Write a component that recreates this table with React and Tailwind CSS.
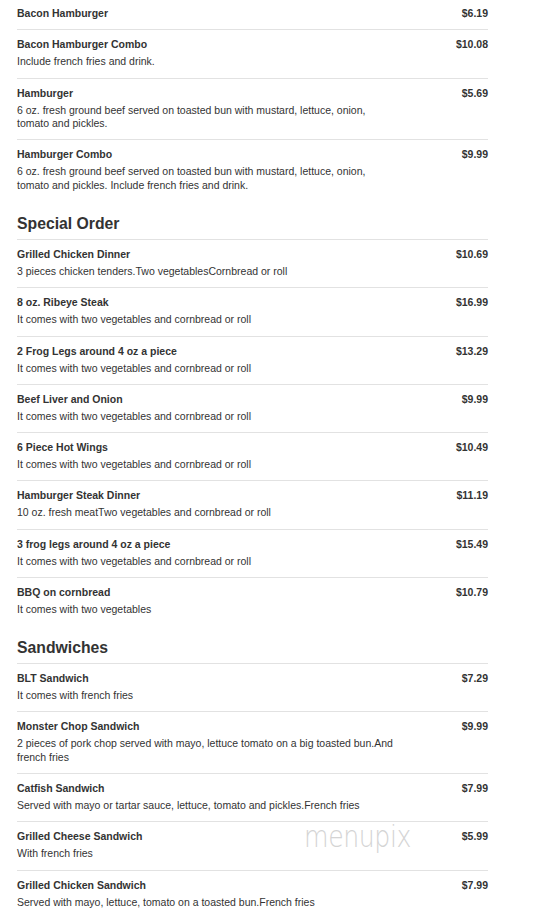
import React from "react";

const sections = [
  {
    title: null,
    items: [
      { name: "Bacon Hamburger", price: "$6.19" },
      { name: "Bacon Hamburger Combo", price: "$10.08", desc: "Include french fries and drink." },
      { name: "Hamburger", price: "$5.69", desc: "6 oz. fresh ground beef served on toasted bun with mustard, lettuce, onion, tomato and pickles." },
      { name: "Hamburger Combo", price: "$9.99", desc: "6 oz. fresh ground beef served on toasted bun with mustard, lettuce, onion, tomato and pickles. Include french fries and drink." },
    ],
  },
  {
    title: "Special Order",
    items: [
      { name: "Grilled Chicken Dinner", price: "$10.69", desc: "3 pieces chicken tenders.Two vegetablesCornbread or roll" },
      { name: "8 oz. Ribeye Steak", price: "$16.99", desc: "It comes with two vegetables and cornbread or roll" },
      { name: "2 Frog Legs around 4 oz a piece", price: "$13.29", desc: "It comes with two vegetables and cornbread or roll" },
      { name: "Beef Liver and Onion", price: "$9.99", desc: "It comes with two vegetables and cornbread or roll" },
      { name: "6 Piece Hot Wings", price: "$10.49", desc: "It comes with two vegetables and cornbread or roll" },
      { name: "Hamburger Steak Dinner", price: "$11.19", desc: "10 oz. fresh meatTwo vegetables and cornbread or roll" },
      { name: "3 frog legs around 4 oz a piece", price: "$15.49", desc: "It comes with two vegetables and cornbread or roll" },
      { name: "BBQ on cornbread", price: "$10.79", desc: "It comes with two vegetables" },
    ],
  },
  {
    title: "Sandwiches",
    items: [
      { name: "BLT Sandwich", price: "$7.29", desc: "It comes with french fries" },
      { name: "Monster Chop Sandwich", price: "$9.99", desc: "2 pieces of pork chop served with mayo, lettuce tomato on a big toasted bun.And french fries" },
      { name: "Catfish Sandwich", price: "$7.99", desc: "Served with mayo or tartar sauce, lettuce, tomato and pickles.French fries" },
      { name: "Grilled Cheese Sandwich", price: "$5.99", desc: "With french fries" },
      { name: "Grilled Chicken Sandwich", price: "$7.99", desc: "Served with mayo, lettuce, tomato on a toasted bun.French fries" },
    ],
  },
];

function Item({ item }) {
  return (
    <div className="border-t border-[#e2e2e2] pt-[7px] pb-[8.75px]">
      <div className="flex justify-between items-start">
        <div className="text-[10.5px] leading-[15px] font-bold text-[#333]">{item.name}</div>
        <div className="text-[10.5px] leading-[15px] font-bold text-[#333]">{item.price}</div>
      </div>
      {item.desc && (
        <div className="mt-[3px] w-[380px] text-[10.5px] leading-[13.5px] text-[#333]">{item.desc}</div>
      )}
    </div>
  );
}

export default function App() {
  return (
    <div className="relative h-[922px] w-[539px] overflow-hidden bg-white font-['Liberation_Sans',Arial,sans-serif]">
      <div className="ml-[17px] w-[471px] -mt-[2.5px]">
        {sections.map((s, i) => (
          <div key={i}>
            {s.title && (
              <h2 className="mt-[13px] mb-[5px] text-[15.75px] leading-[20px] font-bold text-[#333]">{s.title}</h2>
            )}
            {s.items.map((it, j) => (
              <Item key={j} item={it} />
            ))}
          </div>
        ))}
      </div>
      <div className="absolute left-[304px] top-[822px] text-[30px] leading-[30px] font-extralight text-[#d4d4d4] font-['DejaVu_Sans',sans-serif] scale-x-[0.84] origin-left tracking-[-0.5px] select-none">
        menupix
      </div>
    </div>
  );
}
